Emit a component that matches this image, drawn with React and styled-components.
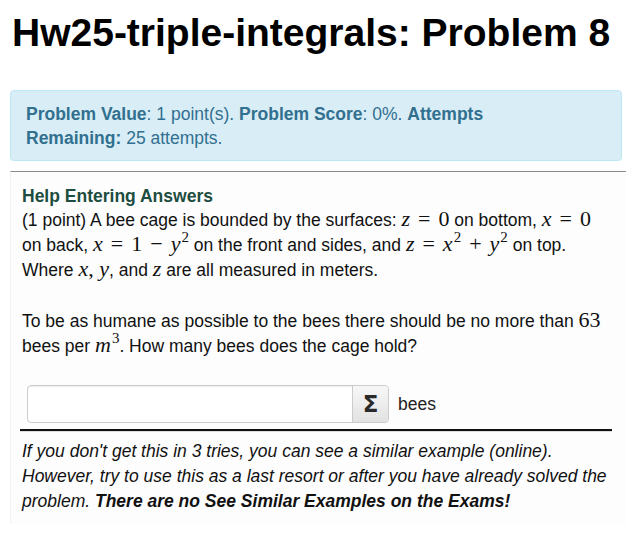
import React from "react";
import styled, { createGlobalStyle } from "styled-components";

const GlobalStyle = createGlobalStyle`
  html, body {
    margin: 0;
    padding: 0;
    background: #ffffff;
  }
  body {
    font-family: "Liberation Sans", Arial, sans-serif;
    font-size: 17.5px;
    color: #111;
  }
`;

const Page = styled.div`
  padding: 0 4px 0 10px;
`;

const Title = styled.h1`
  margin: 0;
  padding: 10px 0 0 2px;
  font-size: 39px;
  line-height: 46px;
  font-weight: 700;
  color: #000;
`;

const InfoBox = styled.div`
  margin-top: 34px;
  background: #d9edf7;
  border: 1px solid #bce8f1;
  border-radius: 4px;
  padding: 11px 15px 10px;
  color: #31708f;
  line-height: 24px;
`;

const Label = styled.b`
  font-weight: 700;
`;

const ProblemPanel = styled.div`
  margin: 10px -4px 0 0;
  border-top: 1px solid #8a8a8a;
  border-left: 1px solid #f2f2f2;
  background: #fdfdfd;
  padding: 12px 13px 10px 11px;
  line-height: 25px;
  color: #111;
`;

const HelpLink = styled.div`
  font-weight: 700;
  color: #1d4d40;
  line-height: 24px;
`;

const Para = styled.p`
  margin: 0 0 26px;
`;

const M = styled.span`
  font-family: "Liberation Serif", "Times New Roman", serif;
  font-size: 22px;
  line-height: 1;
  font-style: ${(p) => (p.$up ? "normal" : "italic")};
  white-space: nowrap;
`;

const Op = styled.span`
  font-family: "Liberation Serif", "Times New Roman", serif;
  font-size: 22px;
  line-height: 1;
  padding: 0 8px;
`;

const Sup = styled.sup`
  font-family: "Liberation Serif", "Times New Roman", serif;
  font-style: normal;
  font-size: 15px;
  line-height: 0;
  vertical-align: 9px;
  padding-left: 1px;
`;

const AnswerRow = styled.div`
  display: flex;
  align-items: center;
  gap: 9px;
  margin: 12px 0 6px 5px;
`;

const InputGroup = styled.div`
  display: flex;
  width: 362px;
  height: 38px;
  border: 1px solid #ccc;
  border-radius: 4px;
  box-sizing: border-box;
  background: #fff;
  overflow: hidden;
  box-shadow: inset 0 1px 1px rgba(0, 0, 0, 0.075);
`;

const AnswerInput = styled.input`
  flex: 1;
  min-width: 0;
  border: none;
  outline: none;
  background: transparent;
  font-size: 16px;
  padding: 0 10px;
`;

const SigmaButton = styled.button`
  width: 36px;
  border: none;
  border-left: 1px solid #ccc;
  background: linear-gradient(#f7f7f7, #e2e2e2);
  font-family: "DejaVu Sans", sans-serif;
  font-size: 23px;
  font-weight: 700;
  color: #2a2a2a;
  padding: 0;
  cursor: pointer;
`;

const Unit = styled.span`
  color: #222;
`;

const Rule = styled.hr`
  margin: 0 0 0 -2px;
  width: 592px;
  border: none;
  border-top: 2px solid #111;
  border-bottom: 1px solid #ddd;
`;

const Note = styled.p`
  margin: 7px 0 0;
  font-style: italic;
  line-height: 25px;
  color: #111;
`;

export default function App() {
  return (
    <Page>
      <GlobalStyle />
      <Title>Hw25-triple-integrals: Problem 8</Title>
      <InfoBox>
        <Label>Problem Value</Label>: 1 point(s). <Label>Problem Score</Label>: 0%.{" "}
        <Label>Attempts</Label>
        <br />
        <Label>Remaining:</Label> 25 attempts.
      </InfoBox>
      <ProblemPanel>
        <HelpLink>Help Entering Answers</HelpLink>
        <Para>
          (1 point) A bee cage is bounded by the surfaces: <M>z</M>
          <Op>=</Op>
          <M $up>0</M> on bottom, <M>x</M>
          <Op>=</Op>
          <M $up>0</M> on back, <M>x</M>
          <Op>=</Op>
          <M $up>1</M>
          <Op>−</Op>
          <M>
            y<Sup>2</Sup>
          </M>{" "}
          on the front and sides, and <M>z</M>
          <Op>=</Op>
          <M>
            x<Sup>2</Sup>
          </M>
          <Op>+</Op>
          <M>
            y<Sup>2</Sup>
          </M>{" "}
          on top. Where <M>x</M>
          <M $up>, </M>
          <M>y</M>, and <M>z</M> are all measured in meters.
        </Para>
        <Para>
          To be as humane as possible to the bees there should be no more than{" "}
          <M $up>63</M> bees per{" "}
          <M>
            m<Sup>3</Sup>
          </M>
          . How many bees does the cage hold?
        </Para>
        <AnswerRow>
          <InputGroup>
            <AnswerInput aria-label="answer" />
            <SigmaButton>Σ</SigmaButton>
          </InputGroup>
          <Unit>bees</Unit>
        </AnswerRow>
        <Rule />
        <Note>
          If you don't get this in 3 tries, you can see a similar example (online).
          However, try to use this as a last resort or after you have already solved the
          problem. <b>There are no See Similar Examples on the Exams!</b>
        </Note>
      </ProblemPanel>
    </Page>
  );
}
